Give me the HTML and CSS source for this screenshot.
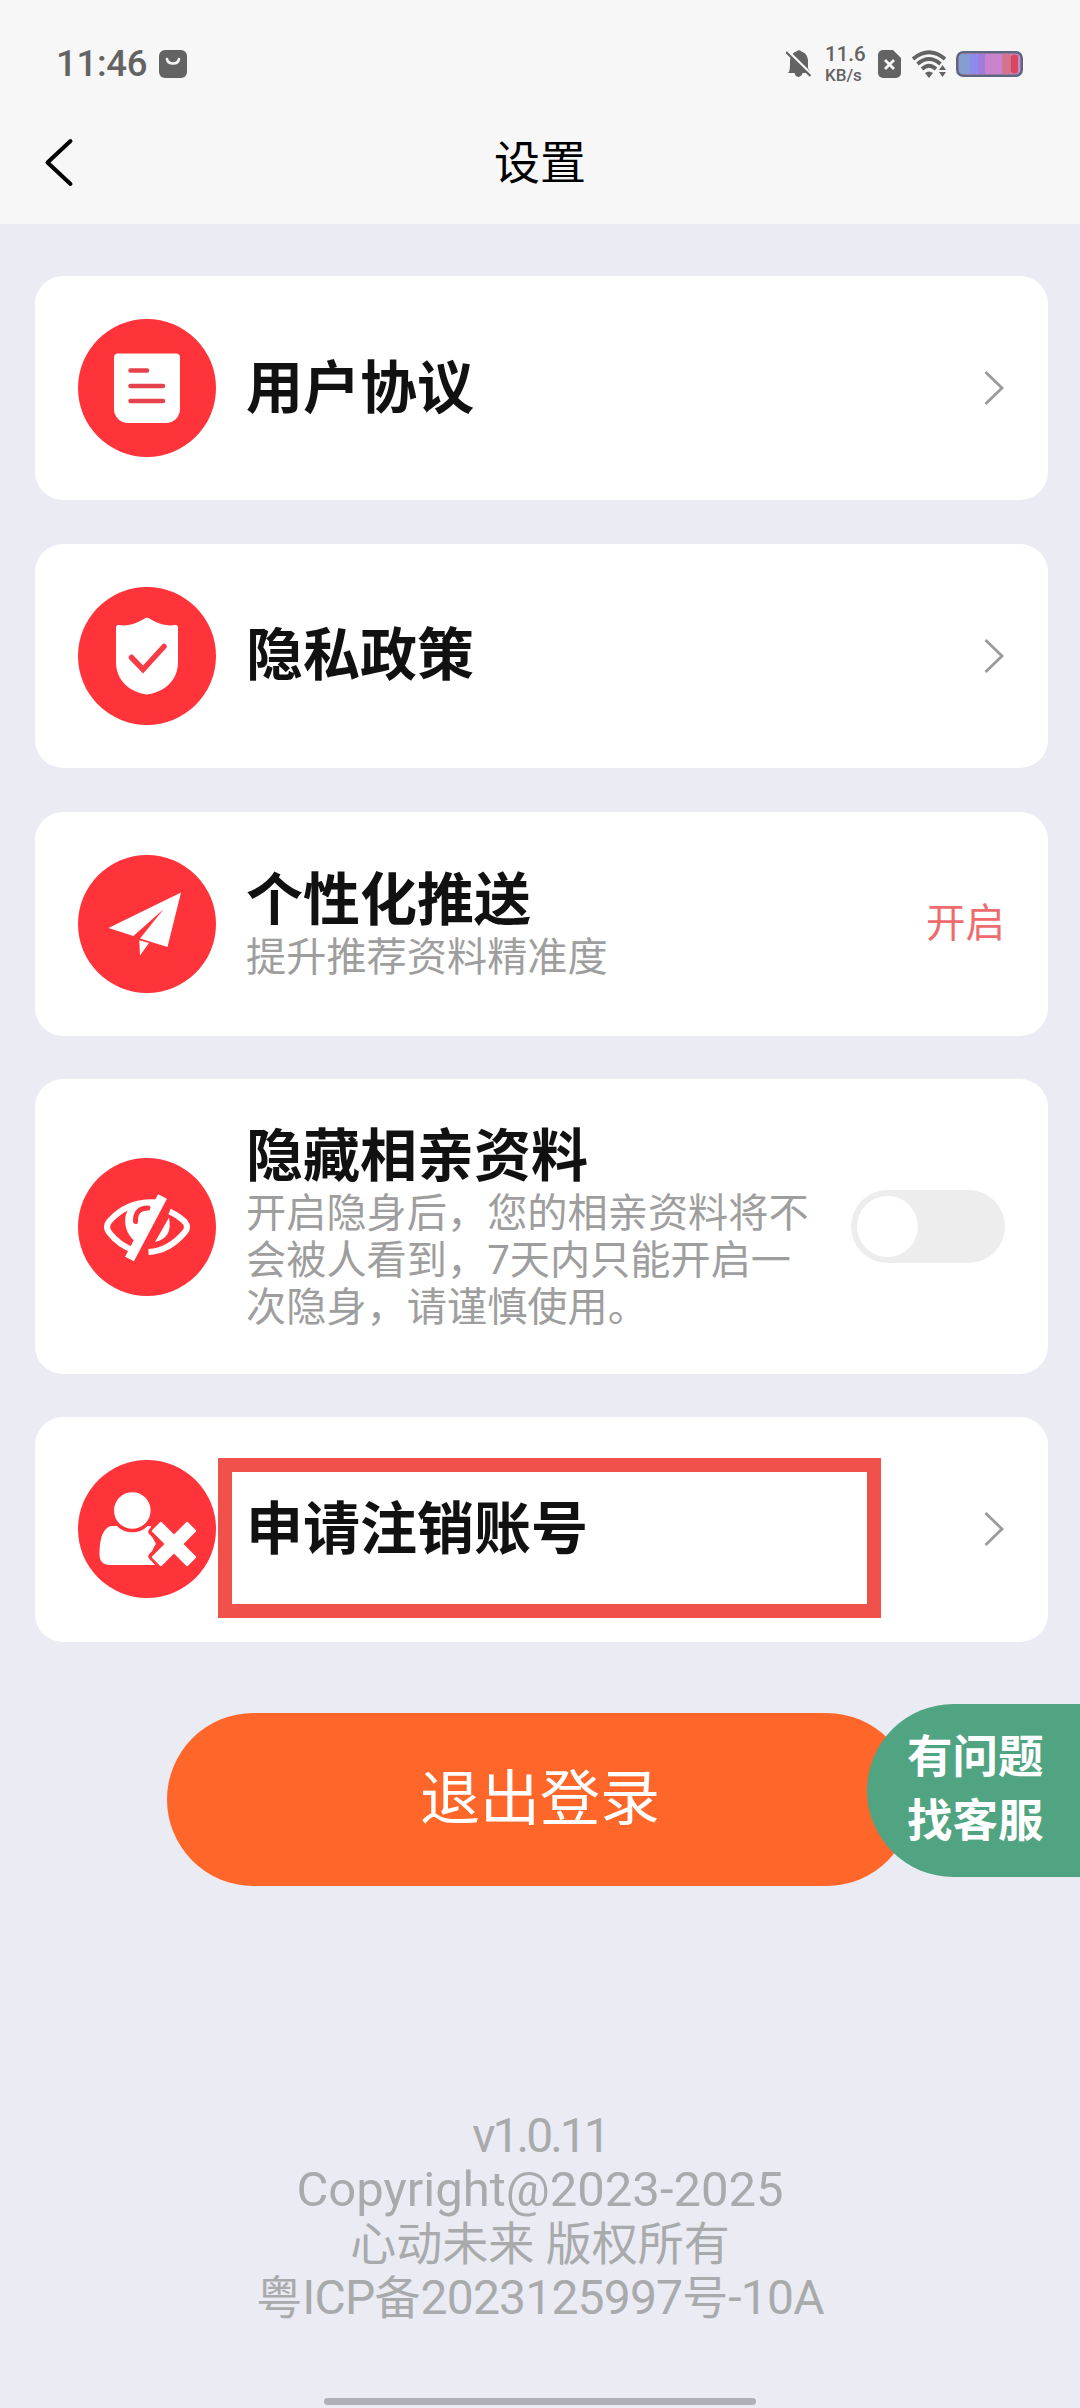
FILE: index.html
```html
<!DOCTYPE html>
<html lang="zh-CN">
<head>
<meta charset="utf-8">
<title>设置</title>
<link rel="stylesheet" href="styles.css">
</head>
<body>
<header class="header">
  <div class="status">
    <span class="clock">11:46</span>
    <svg class="bag" width="28" height="28" viewBox="0 0 28 28"><rect width="28" height="28" rx="6" fill="#636363"/><path d="M8 9c1 6 11 6 12 0" fill="none" stroke="#f7f7f8" stroke-width="2.6" stroke-linecap="round"/></svg>
    <span class="spacer"></span>
    <svg class="bell" width="26" height="28" viewBox="0 0 26 28"><path d="M3 22c1-3 1-6 1-10C4 5 8 2 10.500 1.500Q13 -1 15.500 1.500C20 3 22 7 22 11v7l3 5H16.500a4 4 0 0 1-7 2.500L8.500 23H1.500z" fill="#636363"/><path d="M.5 0L26 25" stroke="#f7f7f8" stroke-width="3"/><path d="M0 2L24.500 26" stroke="#636363" stroke-width="2.300"/></svg>
    <span class="speed"><b>11.6</b><b class="unit">KB/s</b></span>
    <svg class="sim" width="23" height="28" viewBox="0 0 23 28"><path d="M5 0h10l8 8v15a5 5 0 0 1-5 5H5a5 5 0 0 1-5-5V5a5 5 0 0 1 5-5z" fill="#636363"/><path d="M7 10l9 9M16 10l-9 9" stroke="#f7f7f8" stroke-width="2.800"/></svg>
    <svg class="wifi" width="34" height="28" viewBox="0 0 34 28"><g fill="none" stroke="#636363" stroke-width="3.800"><path d="M1 9Q17-4.500 33 9"/><path d="M5.500 14Q17 4 28.500 14"/><path d="M10 19Q17 12.500 24 19"/></g><path d="M13 23q4-3 8 0l-4 5z" fill="#636363"/><path d="M30.500 14l-6 6v8h9.500v-8z" fill="#f7f7f8"/><path d="M30.500 15l3.500 5h-7zM30.500 27l3.500-5h-7z" fill="#636363"/></svg>
    <svg class="battery" width="67" height="26" viewBox="0 0 67 26"><rect x="1.250" y="1.250" width="64.500" height="23.500" rx="6" fill="#c58abf" stroke="#5f6684" stroke-width="2.500"/><path d="M7 3h7v20H7a4 4 0 0 1-4-4V7a4 4 0 0 1 4-4z" fill="#839dd0"/><path d="M14 3h8v20h-8z" fill="#8d8bed"/><path d="M22 3h7v20h-7z" fill="#a07cde"/><path d="M29 3h17v20H29z" fill="#c883cc"/><path d="M46 3h9v20h-9z" fill="#d2748e"/><rect x="55" y="3.500" width="7" height="19" rx="3" fill="#d74662"/></svg>
  </div>
  <div class="navbar">
    <svg class="back" width="32" height="50" viewBox="0 0 32 50"><path d="M27.500 3L4.500 24.500l23 21.500" fill="none" stroke="#000" stroke-width="4" stroke-linecap="round" stroke-linejoin="round"/></svg>
    <h1 class="page-title">设置</h1>
  </div>
</header>

<main class="content">
  <section class="card">
    <svg class="icon" viewBox="0 0 138 138"><circle cx="69" cy="69" r="69" fill="#ff343b"/><path d="M40 34.500h58a4 4 0 0 1 4 4V90a14 14 0 0 1-14 14H50a14 14 0 0 1-14-14V38.500a4 4 0 0 1 4-4z" fill="#fff"/><path d="M52.500 51.500H69M52.500 67H85M52.500 82H85" stroke="#e6424c" stroke-width="4.500" stroke-linecap="round"/></svg>
    <div class="text"><h2>用户协议</h2></div>
    <svg class="chevron" viewBox="0 0 21 34"><path d="M1.500 1l16.500 16L1.500 33" fill="none" stroke="#9b9b9b" stroke-width="2.800"/></svg>
  </section>
  <section class="card">
    <svg class="icon" viewBox="0 0 138 138"><circle cx="69" cy="69" r="69" fill="#ff343b"/><path d="M69 30.500Q71 31 73 32.500Q86 40 97 38Q100 37.500 100 41V75C100 94 86 105 69 107.500C52 105 38 94 38 75V41Q38 37.500 41 38Q52 40 65 32.500Q67 31 69 30.500z" fill="#fff"/><path d="M53.500 70.500L65 82.500l21-23" fill="none" stroke="#f83c45" stroke-width="5.500" stroke-linecap="round"/></svg>
    <div class="text"><h2>隐私政策</h2></div>
    <svg class="chevron" viewBox="0 0 21 34"><path d="M1.500 1l16.500 16L1.500 33" fill="none" stroke="#9b9b9b" stroke-width="2.800"/></svg>
  </section>
  <section class="card">
    <svg class="icon" viewBox="0 0 138 138"><circle cx="69" cy="69" r="69" fill="#ff343b"/><path d="M30.500 73L103 37.500 89.500 92 62 83.500 85.500 54.300 55.400 81zM61.300 85.300l9.700 2.700-9 12.500z" fill="#fff"/></svg>
    <div class="text"><h2>个性化推送</h2><p>提升推荐资料精准度</p></div>
    <span class="state">开启</span>
  </section>
  <section class="card card-tall">
    <svg class="icon" viewBox="0 0 138 138"><circle cx="69" cy="69" r="69" fill="#ff343b"/><g fill="none" stroke="#fff" stroke-width="6"><path d="M80 44.500Q50 42 31.500 63Q26.500 69 31.500 75Q41 87 55 92"/><path d="M91.500 53.500Q99 56.500 107 64Q111 69 107 74Q91 93 70.500 94"/></g><path d="M50 51L80 42 60 86Q45 75 47.500 58z" fill="#fff"/><path d="M57.500 63.500Q57 50 70 50" fill="none" stroke="#ff343b" stroke-width="5" stroke-linecap="round"/><path d="M91 59.500L77 84Q95 80 91 59.500z" fill="#fff"/><path d="M84.500 38.500L51.500 101" stroke="#fff" stroke-width="10"/></svg>
    <div class="text"><h2>隐藏相亲资料</h2><p>开启隐身后，您的相亲资料将不<br>会被人看到，7天内只能开启一<br>次隐身，请谨慎使用。</p></div>
    <div class="toggle"><span class="knob"></span></div>
  </section>
  <section class="card">
    <svg class="icon" viewBox="0 0 138 138"><circle cx="69" cy="69" r="69" fill="#ff343b"/><path d="M33 66H73Q71 72 78 84Q70 94 78 105H32Q21.500 105 21.500 94Q21.500 69 33 66z" fill="#fff"/><circle cx="54.300" cy="50.500" r="20" fill="#fff" stroke="#ff343b" stroke-width="3.500"/><g transform="translate(96 84) rotate(45)"><path d="M-24-6.500h48v13h-48zM-6.500-24h13v48h-13z" fill="#ff343b" stroke="#ff343b" stroke-width="8" stroke-linejoin="round"/><path d="M-24-5.500h48v11h-48zM-5.500-24h11v48h-11z" fill="#fff" stroke="#fff" stroke-width="2.500" stroke-linejoin="round"/></g></svg>
    <div class="text"><h2>申请注销账号</h2></div>
    <svg class="chevron" viewBox="0 0 21 34"><path d="M1.500 1l16.500 16L1.500 33" fill="none" stroke="#9b9b9b" stroke-width="2.800"/></svg>
    <span class="highlight"></span>
  </section>
  <button class="logout">退出登录</button>
</main>

<aside class="service">有问题<br>找客服</aside>

<footer class="footer">
  <div class="line-version">v1.0.11</div>
  <div class="line-copy">Copyright@2023-2025</div>
  <div class="line-owner">心动未来 版权所有</div>
  <div class="line-icp">粤<span>ICP</span>备<span>2023125997</span>号<span>-10A</span></div>
  <span class="home-bar"></span>
</footer>
</body>
</html>
```
FILE: styles.css
```css
* { box-sizing: border-box; }
body {
  margin: 0;
  width: 1080px;
  height: 2408px;
  position: relative;
  display: flex;
  flex-direction: column;
  overflow: hidden;
  background: #ebebf3;
  font-family: Roboto, "Noto Sans CJK SC", sans-serif;
}
h1, h2, p { margin: 0; }
svg { display: block; flex: none; }

.header { height: 224px; background: #f7f7f8; }
.status {
  height: 102px;
  padding: 26px 57px 0 56px;
  display: flex;
  align-items: center;
  color: #636363;
}
.clock {
  width: 103px;
  font-size: 36.500px;
  font-weight: 500;
  line-height: 40px;
  letter-spacing: -.3px;
}
.spacer { flex: 1; }
.speed {
  width: 53px;
  padding-left: 13px;
  display: flex;
  flex-direction: column;
}
.speed b { font-size: 20.500px; font-weight: 500; line-height: 21px; }
.speed .unit { font-size: 17px; line-height: 20px; }
.sim { margin-left: 13px; }
.wifi { margin-left: 11px; }
.battery { margin-left: 10px; }
.navbar {
  height: 122px;
  display: grid;
  grid-template-columns: 120px 1fr 120px;
  align-items: center;
}
.back { margin-left: 43px; }
.page-title {
  font-size: 46px;
  font-weight: 400;
  line-height: 60px;
  text-align: center;
  color: #000;
}

.content {
  padding: 52px 32px 0 35px;
  display: flex;
  flex-direction: column;
  gap: 43.5px;
}
.card {
  position: relative;
  height: 224.25px;
  padding: 0 43px;
  border-radius: 28px;
  background: #fff;
  display: flex;
  align-items: center;
}
.card-tall { height: 294.5px; }
.icon { width: 138px; height: 138px; }
.text { flex: 1; padding-left: 30px; white-space: nowrap; }
.text h2 {
  font-size: 57px;
  font-weight: 700;
  line-height: 67px;
  color: #111;
}
.text p {
  font-size: 40.200px;
  line-height: 47px;
  color: #9e9e9e;
}
.chevron { width: 21px; height: 34px; }
.state { font-size: 39.500px; line-height: 48px; color: #ee6b6e; }
.toggle {
  width: 154px;
  height: 73px;
  padding: 6px;
  border-radius: 37px;
  background: #ededed;
}
.knob {
  display: block;
  width: 61px;
  height: 61px;
  border-radius: 50%;
  background: #fff;
}
/* annotation frame drawn over the last row */
.highlight {
  position: absolute;
  left: 183px;
  top: 41px;
  width: 663px;
  height: 160px;
  border: 14px solid #f0524b;
}
.logout {
  align-self: center;
  width: 746px;
  height: 173px;
  margin: 28px 0 0 -3px;
  padding: 0;
  border: 0;
  border-radius: 87px;
  background: #ff6629;
  color: #fff;
  font: 400 60px/80px Roboto, "Noto Sans CJK SC", sans-serif;
}
/* floating support tab */
.service {
  position: absolute;
  right: 0;
  top: 1704px;
  width: 213px;
  height: 173px;
  padding: 22px 0 0 40px;
  border-radius: 87px 0 0 87px;
  background: #50a482;
  color: #fff;
  font-size: 45.500px;
  font-weight: 700;
  line-height: 64px;
}
.footer {
  margin-top: auto;
  padding-bottom: 3px;
  display: flex;
  flex-direction: column;
  align-items: center;
  font-size: 46px;
  line-height: 54px;
  color: #a9aaac;
  white-space: nowrap;
}
.footer div { height: 54px; }
.line-version { font-size: 48px; letter-spacing: -3px; }
.line-copy { font-size: 49px; }
.line-icp span { font-size: 48px; letter-spacing: -.8px; }
.home-bar {
  width: 432px;
  height: 7px;
  margin-top: 73px;
  border-radius: 4px;
  background: #b0b0ba;
}
```
